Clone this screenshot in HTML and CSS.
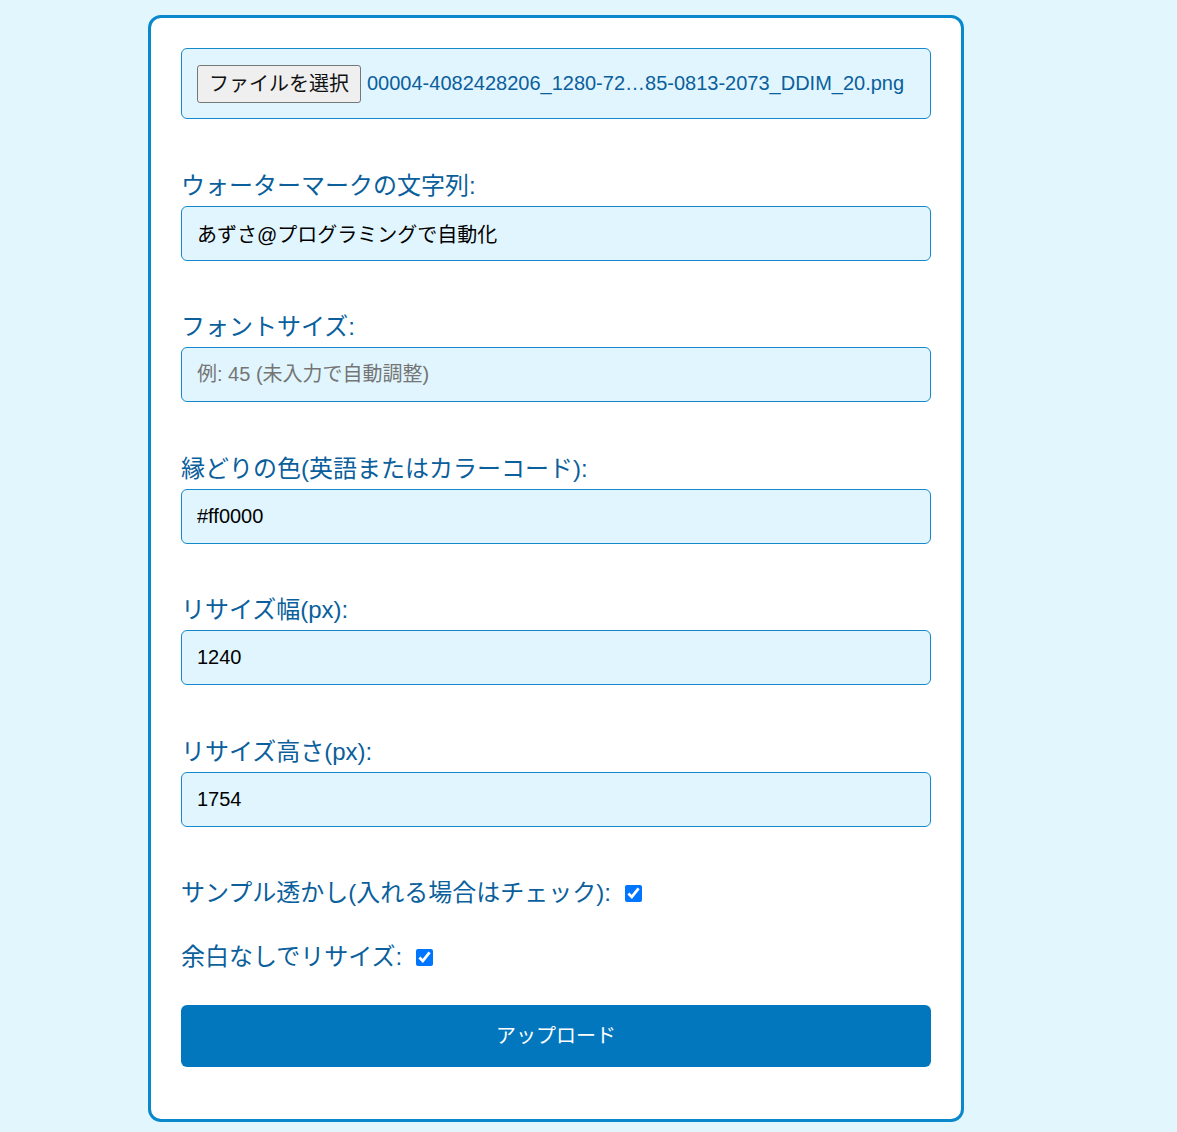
FILE: index.html
```html
<!DOCTYPE html>
<html lang="ja">
<head>
<meta charset="utf-8">
<title>ウォーターマーク</title>
<link rel="stylesheet" href="styles.css">
</head>
<body>
<form class="card">
  <div class="file-box">
    <span class="file-btn">ファイルを選択</span>
    <span class="file-name">00004-4082428206_1280-72…85-0813-2073_DDIM_20.png</span>
  </div>

  <div class="field">
    <label class="label">ウォーターマークの文字列:</label>
    <input class="text-input" type="text" value="あずさ@プログラミングで自動化">
  </div>

  <div class="field">
    <label class="label">フォントサイズ:</label>
    <input class="text-input" type="text" placeholder="例: 45 (未入力で自動調整)">
  </div>

  <div class="field">
    <label class="label">縁どりの色(英語またはカラーコード):</label>
    <input class="text-input" type="text" value="#ff0000">
  </div>

  <div class="field">
    <label class="label">リサイズ幅(px):</label>
    <input class="text-input" type="text" value="1240">
  </div>

  <div class="field">
    <label class="label">リサイズ高さ(px):</label>
    <input class="text-input" type="text" value="1754">
  </div>

  <div class="check-row first">
    <span class="label-inline">サンプル透かし(入れる場合はチェック):</span>
    <input class="check" type="checkbox" checked>
  </div>

  <div class="check-row second">
    <span class="label-inline">余白なしでリサイズ:</span>
    <input class="check" type="checkbox" checked>
  </div>

  <button class="submit" type="button">アップロード</button>
</form>
</body>
</html>
```

FILE: styles.css
```css
* {
  box-sizing: border-box;
}

html, body {
  margin: 0;
  padding: 0;
}

body {
  background: #e1f6fd;
  font-family: "Liberation Sans", Arial, "Noto Sans CJK JP", sans-serif;
  padding-top: 15px;
  padding-bottom: 9px;
}

.card {
  width: 816px;
  margin-left: 148px;
  background: #ffffff;
  border: 3px solid #0a88cc;
  border-radius: 13px;
  padding: 30px;
  display: flex;
  flex-direction: column;
}

.file-box {
  height: 71px;
  border: 1px solid #1589c9;
  border-radius: 6px;
  background: #e1f5fe;
  padding: 15px;
  display: flex;
  align-items: center;
}

.file-btn {
  height: 38px;
  padding: 0 11px;
  background: #efefef;
  border: 1px solid #767676;
  border-radius: 3px;
  font-size: 20px;
  line-height: 36px;
  color: #111111;
  display: flex;
  align-items: center;
}

.file-name {
  margin-left: 6px;
  font-size: 20px;
  line-height: 23px;
  color: #0a5f9c;
  white-space: nowrap;
}

.field {
  margin-top: 52.5px;
  display: flex;
  flex-direction: column;
}

.label,
.label-inline {
  font-size: 24px;
  line-height: 28px;
  color: #0a5f9c;
}

.label {
  display: block;
  margin-bottom: 6px;
}

.text-input {
  width: 100%;
  height: 55px;
  padding: 15px;
  border: 1px solid #1589c9;
  border-radius: 6px;
  background: #e1f5fe;
  font-family: "Liberation Sans", Arial, "Noto Sans CJK JP", sans-serif;
  font-size: 20px;
  line-height: 23px;
  color: #000000;
  outline: none;
  margin: 0;
}

.text-input::placeholder {
  color: #757575;
}

.check-row {
  display: flex;
  align-items: center;
  height: 28px;
}

.check-row.first {
  margin-top: 52.5px;
}

.check-row.second {
  margin-top: 36px;
}

.check {
  width: 17px;
  height: 17px;
  margin: 0 0 0 14px;
}

.submit {
  margin-top: 34px;
  margin-bottom: 22px;
  height: 62px;
  width: 100%;
  padding: 0 0 3px 0;
  border: none;
  border-radius: 6px;
  background: #0277bd;
  color: #ffffff;
  font-family: "Noto Sans CJK JP", sans-serif;
  font-weight: 400;
  font-size: 20px;
  line-height: 23px;
  cursor: pointer;
}
```
